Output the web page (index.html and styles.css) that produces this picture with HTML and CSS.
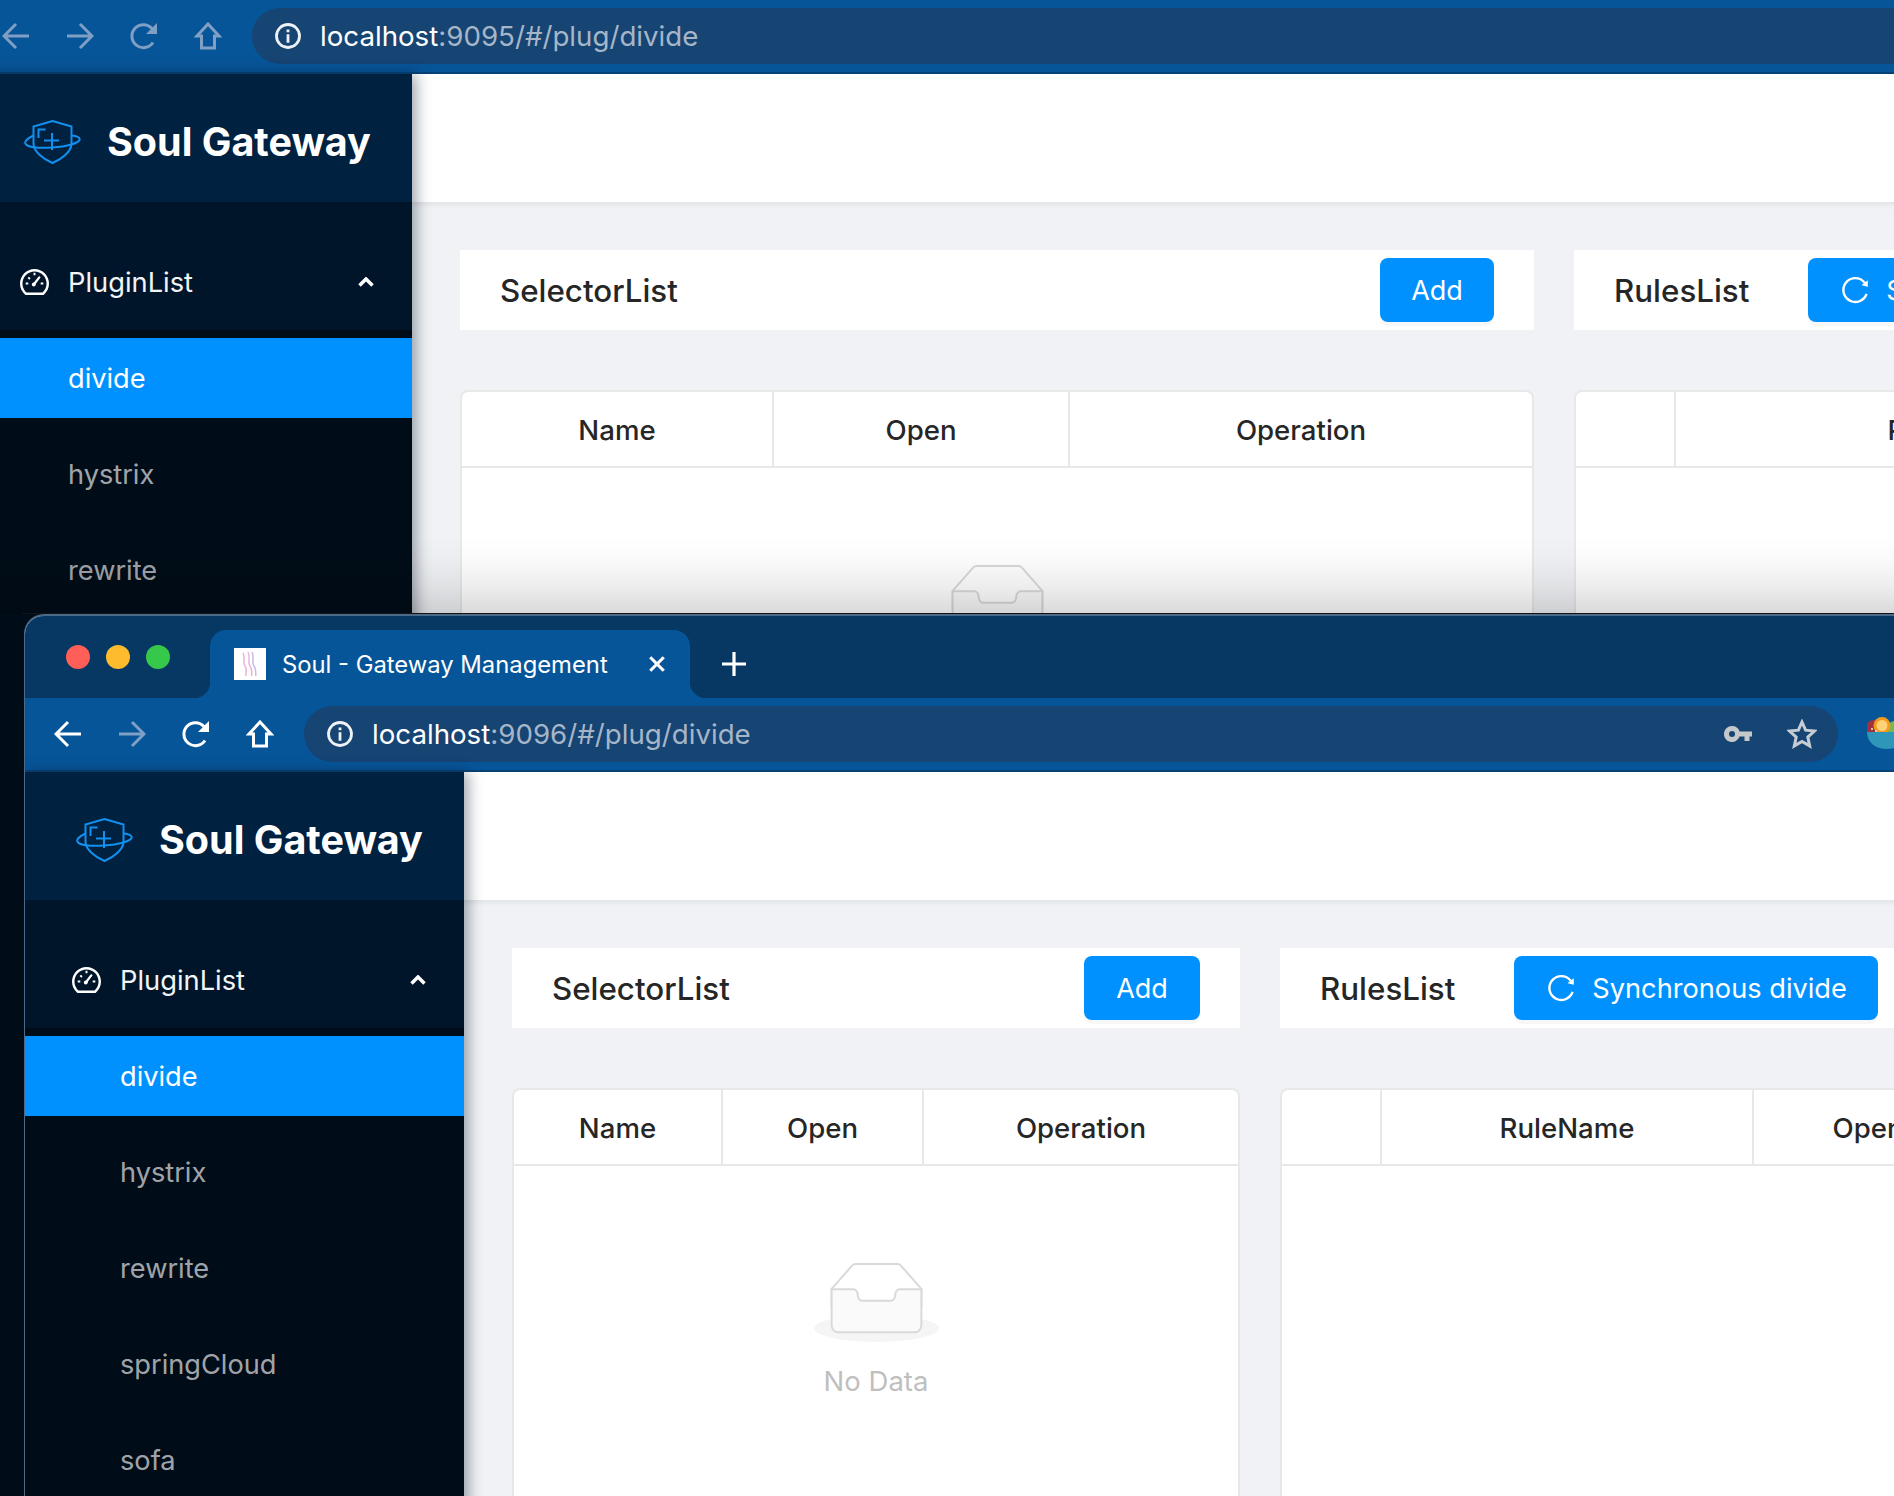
FILE: index.html
```html
<!DOCTYPE html>
<html lang="en">
<head>
<meta charset="utf-8">
<title>Soul - Gateway Management</title>
<link rel="stylesheet" href="styles.css">
</head>
<body>
<svg class="defs" width="0" height="0" aria-hidden="true">
  <defs>
    <symbol id="i-back" viewBox="0 0 28 28"><path d="M27 14H3M14 2 2 14l12 12" fill="none" stroke="currentColor" stroke-width="3"/></symbol>
    <symbol id="i-forward" viewBox="0 0 28 28"><path d="M1 14h24M14 2l12 12-12 12" fill="none" stroke="currentColor" stroke-width="3"/></symbol>
    <symbol id="i-reload" viewBox="0 0 28 28"><path d="M23 20.500A11.500 11.500 0 1 1 22 6.500" fill="none" stroke="currentColor" stroke-width="3"/><path d="M27 1v11H16z" fill="currentColor"/></symbol>
    <symbol id="i-home" viewBox="0 0 28 28"><path d="M14 2 3 14h4.500v12h13V14H25z" fill="none" stroke="currentColor" stroke-width="3" stroke-linejoin="miter"/></symbol>
    <symbol id="i-info" viewBox="0 0 28 28"><circle cx="14" cy="14" r="11.500" fill="none" stroke="currentColor" stroke-width="2.800"/><path d="M12.600 7.500h2.800v2.800h-2.800zM12.600 12.300h2.800v8.500h-2.800z" fill="currentColor"/></symbol>
    <symbol id="i-logo" viewBox="0 0 57 44"><g fill="none" stroke="#1190f0" stroke-width="2"><path d="M28.500 1 47.500 6.500v17c0 8-9.500 15.500-19 19.500-9.500-4-19-11.500-19-19.500v-17z"/><path d="M9.500 15.500C3.500 18.500 0.800 21 1.200 23c1 4 12 5.500 27 4.500s27-4.500 27.500-8c.300-2-3-3.500-8-4"/><path d="M14.500 18V9.500H21.500M20 20.500H35M28 13V30"/></g></symbol>
    <symbol id="i-gauge" viewBox="64 112 896 800"><path fill="currentColor" d="M924.800 385.600a446.700 446.700 0 0 0-96-142.400 446.700 446.700 0 0 0-142.400-96C631.100 123.800 572.500 112 512 112s-119.100 11.800-174.400 35.200a446.700 446.700 0 0 0-142.400 96 446.700 446.700 0 0 0-96 142.400C75.800 440.900 64 499.500 64 560c0 132.700 58.300 257.700 159.900 343.100l1.700 1.400c5.800 4.800 13.100 7.500 20.600 7.500h531.700c7.500 0 14.800-2.700 20.600-7.500l1.700-1.400C901.700 817.700 960 692.700 960 560c0-60.500-11.900-119.100-35.200-174.400zM761.400 836H262.600A371.120 371.120 0 0 1 140 560c0-99.400 38.700-192.800 109-263 70.300-70.300 163.700-109 263-109 99.400 0 192.800 38.700 263 109 70.300 70.300 109 163.700 109 263 0 105.600-44.500 205.500-122.600 276z"/><path fill="none" stroke="currentColor" stroke-width="70" stroke-linecap="round" d="M490 590 660 370"/><path fill="none" stroke="currentColor" stroke-width="60" d="M512 230v70M240 560h80M704 560h80M320 370l50 50"/><circle cx="490" cy="590" r="60" fill="currentColor"/></symbol>
    <symbol id="i-sync" viewBox="64 64 896 896"><path fill="currentColor" d="M909.100 209.300l-56.400 44.100C775.800 155.100 656.200 92 521.900 92 290 92 102.300 279.500 102 511.500 101.700 743.700 289.800 932 521.900 932c181.300 0 335.800-115 394.600-276.100 1.500-4.200-.7-8.900-4.900-10.300l-56.700-19.500a8 8 0 0 0-10.100 4.800c-1.800 5-3.800 10-5.900 14.900-17.300 41-42.100 77.800-73.700 109.400A344.770 344.770 0 0 1 655.900 829c-42.300 17.900-87.400 27-133.800 27-46.500 0-91.500-9.100-133.800-27A341.500 341.500 0 0 1 279 755.200a342.160 342.160 0 0 1-73.700-109.400c-17.900-42.400-27-87.400-27-133.900s9.100-91.500 27-133.900c17.300-41 42.100-77.800 73.700-109.400 31.600-31.600 68.400-56.400 109.300-73.800 42.300-17.900 87.400-27 133.800-27 46.500 0 91.500 9.100 133.800 27a341.500 341.500 0 0 1 109.300 73.800c9.900 9.900 19.200 20.400 27.800 31.400l-60.200 47a8 8 0 0 0 3 14.100l175.600 43c5 1.200 9.900-2.600 9.900-7.700l.8-180.900c-.1-6.600-7.800-10.300-13-6.200z"/></symbol>
    <symbol id="i-empty" viewBox="0 0 64 41"><g transform="translate(0 1)" fill="none" fill-rule="evenodd"><ellipse fill="#F5F5F5" cx="32" cy="33" rx="32" ry="7"/><g fill-rule="nonzero" stroke="#D9D9D9"><path d="M55 12.760L44.854 1.258C44.367.474 43.656 0 42.907 0H21.093c-.749 0-1.460.474-1.947 1.257L9 12.761V22h46v-9.240z"/><path d="M41.613 15.931c0-1.605.994-2.930 2.227-2.931H55v18.137C55 33.260 53.680 35 52.050 35h-40.100C10.320 35 9 33.259 9 31.137V13h11.160c1.233 0 2.227 1.323 2.227 2.928v.022c0 1.605 1.005 2.901 2.237 2.901h14.752c1.232 0 2.237-1.308 2.237-2.913v-.007z" fill="#FAFAFA"/></g></g></symbol>
  </defs>
</svg>

<section class="window window-back">
  <div class="toolbar">
    <span class="tool dim"><svg class="tool-icon"><use href="#i-back"/></svg></span>
    <span class="tool dim"><svg class="tool-icon"><use href="#i-forward"/></svg></span>
    <span class="tool dim"><svg class="tool-icon"><use href="#i-reload"/></svg></span>
    <span class="tool dim"><svg class="tool-icon"><use href="#i-home"/></svg></span>
    <div class="omnibox">
      <svg class="info"><use href="#i-info"/></svg>
      <span class="url"><span class="host">localhost</span>:9095/#/plug/divide</span>
    </div>
  </div>
  <div class="app">
    <aside class="sidebar">
      <div class="brand"><svg class="logo"><use href="#i-logo"/></svg><span class="brand-name">Soul Gateway</span></div>
      <div class="menu">
        <div class="menu-title"><svg class="gauge"><use href="#i-gauge"/></svg><span class="menu-label">PluginList</span><svg class="chevron" viewBox="0 0 16 10"><path d="M1.500 8.500 8 2l6.500 6.500"/></svg></div>
        <ul class="submenu">
          <li class="item selected">divide</li>
          <li class="item">hystrix</li>
          <li class="item">rewrite</li>
        </ul>
      </div>
    </aside>
    <main class="main">
      <div class="topbar"></div>
      <div class="content content-back">
        <div class="col">
          <div class="card"><h2 class="card-title">SelectorList</h2><button class="btn btn-add-back">Add</button></div>
          <div class="table">
            <div class="thead cols-selector-back"><span class="th">Name</span><span class="th">Open</span><span class="th">Operation</span></div>
            <div class="empty"><svg class="empty-img"><use href="#i-empty"/></svg><div class="empty-text">No Data</div></div>
          </div>
        </div>
        <div class="col">
          <div class="card card-rules"><h2 class="card-title">RulesList</h2><button class="btn btn-sync"><svg class="sync"><use href="#i-sync"/></svg>Synchronous divide</button></div>
          <div class="table">
            <div class="thead cols-rules-back"><span class="th"></span><span class="th">RuleName</span><span class="th">Open</span><span class="th">Operation</span></div>
          </div>
        </div>
      </div>
    </main>
  </div>
</section>

<section class="window window-front">
  <div class="titlebar">
    <div class="lights"><span class="light red"></span><span class="light amber"></span><span class="light green"></span></div>
    <div class="tab">
      <svg class="favicon" viewBox="0 0 32 32"><rect width="32" height="32" fill="#fff"/><path d="M9 5c3 5-1 9 2 13s0 7 1 10M14 4c3 6-1 10 2 14s1 7 2 10" fill="none" stroke="#eeb4d6" stroke-width="1.500"/><path d="M18 4c3 6-1 10 2 14s1 7 2 10" fill="none" stroke="#c3b9ea" stroke-width="1.500"/></svg>
      <span class="tab-title">Soul - Gateway Management</span>
      <svg class="tab-close" viewBox="0 0 16 16"><path d="M2 2l12 12M14 2 2 14"/></svg>
    </div>
    <svg class="new-tab" viewBox="0 0 24 24"><path d="M12 0v24M0 12h24"/></svg>
  </div>
  <div class="toolbar">
    <span class="tool"><svg class="tool-icon"><use href="#i-back"/></svg></span>
    <span class="tool faded"><svg class="tool-icon"><use href="#i-forward"/></svg></span>
    <span class="tool"><svg class="tool-icon"><use href="#i-reload"/></svg></span>
    <span class="tool"><svg class="tool-icon"><use href="#i-home"/></svg></span>
    <div class="omnibox omnibox-front">
      <svg class="info"><use href="#i-info"/></svg>
      <span class="url"><span class="host">localhost</span>:9096/#/plug/divide</span>
      <svg class="key" viewBox="0 0 28 16"><path fill-rule="evenodd" d="M8 0a8 8 0 0 1 7.600 5.500H28v5h-2.500V15h-5v-4.500h-5A8 8 0 1 1 8 0zm0 5a3 3 0 1 0 0 6 3 3 0 0 0 0-6z"/></svg>
      <svg class="star" viewBox="0 0 30 30"><path d="M15 3l3.600 8.200 8.900.9-6.700 6 1.900 8.800L15 22.400l-7.700 4.500 1.900-8.800-6.700-6 8.900-.9z"/></svg>
    </div>
    <svg class="bowl" viewBox="0 0 32 32"><circle cx="7" cy="11" r="8" fill="#a0323f"/><circle cx="28" cy="12" r="8" fill="#76b84f"/><circle cx="15" cy="8.500" r="8.500" fill="#f59b1c"/><circle cx="15" cy="8.500" r="5.500" fill="#ffd27a"/><circle cx="5" cy="12" r="1" fill="#eec"/><circle cx="9" cy="14" r="1" fill="#eec"/><path d="M0 15h40c0 10-8 17-20 17S0 25 0 15z" fill="#2e97b9"/></svg>
  </div>
  <div class="app">
    <aside class="sidebar">
      <div class="brand"><svg class="logo"><use href="#i-logo"/></svg><span class="brand-name">Soul Gateway</span></div>
      <div class="menu">
        <div class="menu-title"><svg class="gauge"><use href="#i-gauge"/></svg><span class="menu-label">PluginList</span><svg class="chevron" viewBox="0 0 16 10"><path d="M1.500 8.500 8 2l6.500 6.500"/></svg></div>
        <ul class="submenu">
          <li class="item selected">divide</li>
          <li class="item">hystrix</li>
          <li class="item">rewrite</li>
          <li class="item">springCloud</li>
          <li class="item">sofa</li>
        </ul>
      </div>
    </aside>
    <main class="main">
      <div class="topbar"></div>
      <div class="content content-front">
        <div class="col">
          <div class="card"><h2 class="card-title">SelectorList</h2><button class="btn btn-add-front">Add</button></div>
          <div class="table">
            <div class="thead cols-selector-front"><span class="th">Name</span><span class="th">Open</span><span class="th">Operation</span></div>
            <div class="empty"><svg class="empty-img"><use href="#i-empty"/></svg><div class="empty-text">No Data</div></div>
          </div>
        </div>
        <div class="col">
          <div class="card card-rules"><h2 class="card-title">RulesList</h2><button class="btn btn-sync"><svg class="sync"><use href="#i-sync"/></svg>Synchronous divide</button></div>
          <div class="table">
            <div class="thead cols-rules-front"><span class="th"></span><span class="th">RuleName</span><span class="th">Open</span><span class="th">Operation</span></div>
          </div>
        </div>
      </div>
    </main>
  </div>
</section>
</body>
</html>
```
FILE: styles.css
```css
* { box-sizing: border-box; }
html, body { margin: 0; height: 100%; }
body {
  position: relative;
  width: 1894px;
  height: 1496px;
  overflow: hidden;
  background: #000c17;
  font-family: Inter, "Liberation Sans", sans-serif;
  color: #262626;
}
.defs { position: absolute; }

/* windows on the desktop */
.window {
  position: absolute;
  display: flex;
  flex-direction: column;
  overflow: hidden;
  background: #f0f2f5;
}
.window-back { z-index: 1; left: -28px; top: 0; width: 2300px; height: 640px; }
.window-front {
  z-index: 2;
  left: 24px;
  top: 614px;
  width: 2300px;
  height: 900px;
  border: 1px solid #4a6a88;
  border-top-width: 2px;
  border-top-left-radius: 20px;
}
/* the front window's outline and soft shadow fall on the window behind it */
.window-back::after {
  content: "";
  position: absolute;
  z-index: 3;
  left: 0;
  right: 0;
  top: 536px;
  height: 78px;
  background: linear-gradient(to bottom, rgba(0, 0, 0, 0) 0%, rgba(0, 0, 0, .02) 30%, rgba(0, 0, 0, .07) 65%, rgba(0, 0, 0, .15) 100%);
  pointer-events: none;
}
.window-back::before {
  content: "";
  position: absolute;
  z-index: 3;
  left: 50px;
  right: 0;
  top: 613px;
  height: 1px;
  background: #14181c;
}

/* browser chrome */
.titlebar {
  flex: none;
  display: flex;
  align-items: flex-end;
  height: 82px;
  background: #073763;
}
.lights { display: flex; gap: 16px; align-self: flex-start; padding: 29px 0 0 41px; width: 185px; }
.light { width: 24px; height: 24px; border-radius: 50%; }
.red { background: #ff5f57; }
.amber { background: #febb2e; }
.green { background: #36c84b; }
.tab {
  position: relative;
  display: flex;
  align-items: center;
  width: 480px;
  height: 68px;
  padding: 0 0 0 24px;
  background: #075599;
  border-radius: 16px 16px 0 0;
}
.tab::before, .tab::after {
  content: "";
  position: absolute;
  bottom: 0;
  width: 16px;
  height: 16px;
}
.tab::before { left: -16px; background: radial-gradient(circle at 0 0, transparent 16px, #075599 16.500px); }
.tab::after { right: -16px; background: radial-gradient(circle at 100% 0, transparent 16px, #075599 16.500px); }
.favicon { width: 32px; height: 32px; flex: none; }
.tab-title { flex: none; margin-left: 16px; width: 366px; font-size: 23.800px; color: #fff; white-space: nowrap; }
.tab-close { flex: none; width: 18px; height: 18px; fill: none; stroke: #fff; stroke-width: 2.800; }
.new-tab { width: 24px; height: 24px; margin: 0 0 22px 32px; fill: none; stroke: #fff; stroke-width: 3.200; }

.toolbar {
  flex: none;
  display: flex;
  align-items: center;
  height: 74px;
  padding: 0 0 0 12px;
  background: #075599;
  border-bottom: 2px solid #074377;
}
.window-front .toolbar { padding-left: 11px; }
.tool { flex: none; display: flex; justify-content: center; width: 64px; color: #fff; }
.tool.faded { color: #7f9fc4; }
.tool.dim { color: #7f9fc4; }
.tool-icon { width: 28px; height: 28px; }
.omnibox {
  flex: 1;
  display: flex;
  align-items: center;
  height: 56px;
  margin-left: 12px;
  padding-left: 22px;
  background: #164473;
  border-radius: 28px;
}
.omnibox-front { flex: none; width: 1534px; padding-right: 21px; }
.info { flex: none; width: 28px; height: 28px; color: #eef2f6; }
.url { margin-left: 18px; font-size: 27.700px; color: #a6b6c9; white-space: nowrap; }
.host { color: #fff; }
.key { width: 28px; height: 16px; margin-left: auto; fill: #c5c7ca; }
.star { width: 30px; height: 30px; margin-left: 35px; fill: none; stroke: #c6ccd3; stroke-width: 3; }
.bowl { flex: none; width: 32px; height: 32px; margin: -2px 0 0 29px; }

/* app frame */
.app { flex: 1; display: flex; min-height: 0; }
.sidebar {
  position: relative;
  z-index: 2;
  flex: none;
  width: 440px;
  background: #000c17;
  box-shadow: 4px 0 14px rgba(0, 21, 41, .4);
}
.window-front .sidebar { width: 439px; }
.window-front .brand { padding-left: 51px; }
.window-front .menu-title { padding-left: 47px; }
.window-front .item { padding-left: 95px; }
.brand {
  display: flex;
  align-items: center;
  height: 128px;
  padding: 8px 0 0 52px;
  background: #002140;
}
.logo { flex: none; width: 57px; height: 44px; }
.brand-name { margin-left: 26px; font-size: 39.500px; font-weight: 700; color: #fff; white-space: nowrap; }
.menu { color: rgba(255, 255, 255, .65); }
.menu-title {
  display: flex;
  align-items: center;
  height: 128px;
  padding: 40px 38px 8px 48px;
  margin: 0;
  background: #001529;
  color: #f2f4f6;
}
.gauge { flex: none; width: 29px; height: 26px; color: #fff; }
.menu-label { margin-left: 19px; font-size: 27.300px; }
.chevron { margin-left: auto; width: 16px; height: 10px; fill: none; stroke: #fff; stroke-width: 3.500; }
.submenu { list-style: none; margin: 0; padding: 8px 0 0; }
.item {
  display: flex;
  align-items: center;
  height: 80px;
  margin-bottom: 16px;
  padding-left: 96px;
  font-size: 27.200px;
}
.item.selected { background: #0091ff; color: #fff; }

.main { flex: 1; min-width: 0; display: flex; flex-direction: column; }
.topbar {
  position: relative;
  z-index: 1;
  flex: none;
  height: 128px;
  background: #fff;
  box-shadow: 0 2px 6px rgba(0, 21, 41, .08);
}
.content { flex: 1; display: grid; column-gap: 40px; padding: 48px 48px 0; }
.content-back { grid-template-columns: 1074px 1fr; }
.content-front { grid-template-columns: 728px 1fr; }
.col { display: flex; flex-direction: column; gap: 60px; min-width: 0; }
.card {
  display: flex;
  align-items: center;
  justify-content: space-between;
  height: 80px;
  padding: 0 40px;
  background: #fff;
}
.card-rules { justify-content: flex-start; gap: 59px; }
.card-title { margin: 2px 0 0; font-size: 31.300px; font-weight: 450; color: #262626; white-space: nowrap; }
.btn {
  display: flex;
  align-items: center;
  justify-content: center;
  height: 64px;
  border: 0;
  border-radius: 8px;
  background: #0091ff;
  color: #fff;
  font: 400 27px Inter, "Liberation Sans", sans-serif;
  box-shadow: 0 4px 0 rgba(0, 0, 0, .03);
  white-space: nowrap;
}
.btn-add-back { width: 114px; }
.btn-add-front { width: 116px; }
.btn-sync { flex: none; width: 364px; gap: 17px; font-size: 27.200px; justify-content: flex-start; padding-left: 33px; }
.sync { width: 28px; height: 28px; }

.table {
  flex: 1;
  background: #fff;
  border: 2px solid #e8e8e8;
  border-bottom: 0;
  border-radius: 8px 8px 0 0;
}
.thead { display: grid; height: 76px; border-bottom: 2px solid #e8e8e8; }
.th {
  display: flex;
  align-items: center;
  justify-content: center;
  padding-top: 2px;
  font-size: 27.600px;
  font-weight: 450;
  color: #262626;
  white-space: nowrap;
  border-right: 2px solid #e8e8e8;
}
.th:last-child { border-right: 0; }
.cols-selector-back { grid-template-columns: 312px 296px 1fr; }
.cols-selector-front { grid-template-columns: 209px 201px 1fr; }
.cols-rules-back { grid-template-columns: 100px 560px 300px 1fr; }
.cols-rules-front { grid-template-columns: 100px 372px 230px 1fr; }

.empty { display: flex; flex-direction: column; align-items: center; padding-top: 96px; }
.empty-img { width: 125px; height: 80px; }
.empty-text { margin-top: 16px; font-size: 27.500px; line-height: 46px; color: #bfbfbf; }
```
